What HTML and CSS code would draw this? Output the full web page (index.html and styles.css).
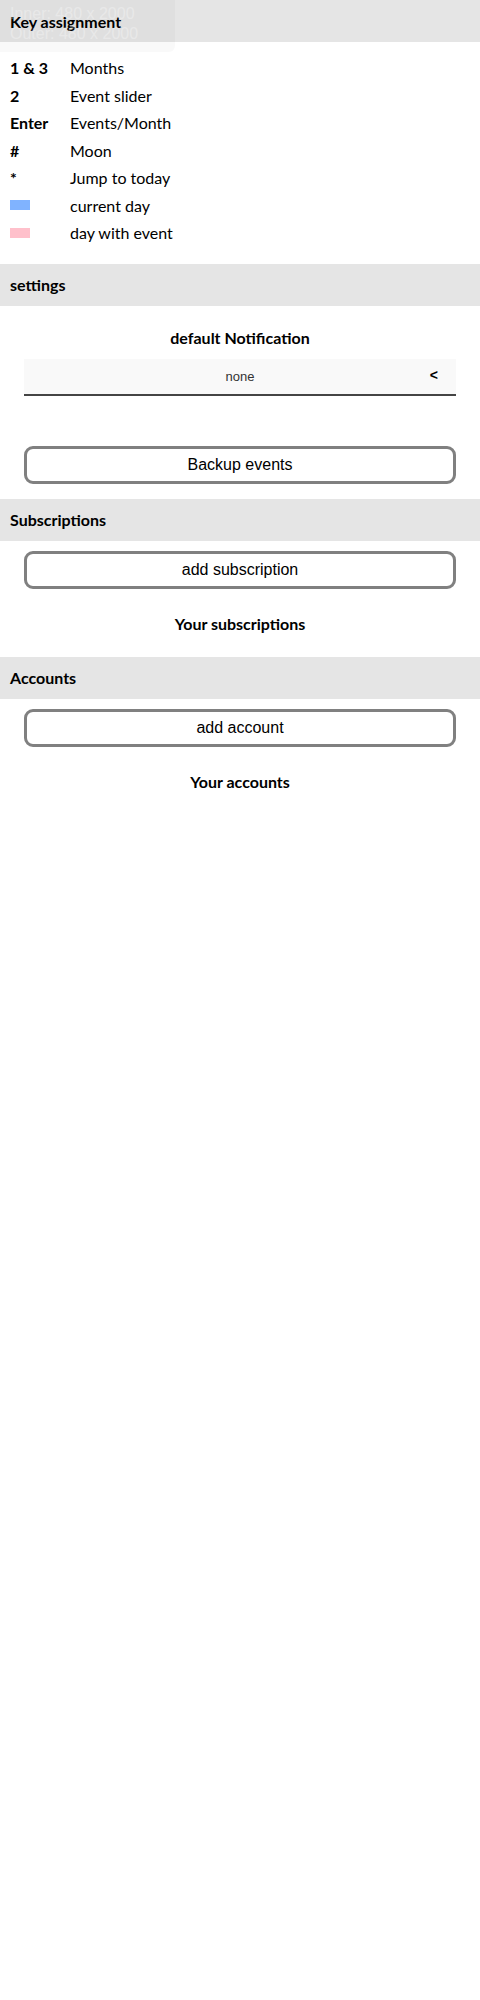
FILE: index.html
```html
<!DOCTYPE html>
<html>
<head>
<meta charset="utf-8">
<link rel="stylesheet" href="styles.css">
</head>
<body>
<div class="size-overlay">
  <div>Inner: 480 x 2000</div>
  <div>Outer: 480 x 2000</div>
</div>

<div class="section-head">Key assignment</div>
<div class="keys">
  <div class="key-row"><span class="key">1 &amp; 3</span><span>Months</span></div>
  <div class="key-row"><span class="key">2</span><span>Event slider</span></div>
  <div class="key-row"><span class="key">Enter</span><span>Events/Month</span></div>
  <div class="key-row"><span class="key">#</span><span>Moon</span></div>
  <div class="key-row"><span class="key">*</span><span>Jump to today</span></div>
  <div class="key-row"><span class="key"><i class="swatch swatch-blue"></i></span><span>current day</span></div>
  <div class="key-row"><span class="key"><i class="swatch swatch-pink"></i></span><span>day with event</span></div>
</div>

<div class="section-head">settings</div>
<div class="settings">
  <div class="sub-title notif-title">default Notification</div>
  <div class="select">
    <span class="select-value">none</span>
    <span class="select-arrow">&lt;</span>
  </div>
  <div class="btn backup-btn">Backup events</div>
</div>

<div class="section-head">Subscriptions</div>
<div class="group">
  <div class="btn">add subscription</div>
  <div class="sub-title list-title">Your subscriptions</div>
</div>

<div class="section-head">Accounts</div>
<div class="group">
  <div class="btn">add account</div>
  <div class="sub-title list-title">Your accounts</div>
</div>
</body>
</html>
```

FILE: styles.css
```css
html, body {
  margin: 0;
  padding: 0;
  background: #ffffff;
}

body {
  font-family: Lato, "Noto Sans", sans-serif;
  font-size: 16px;
  color: #000;
  position: relative;
}

.size-overlay {
  position: absolute;
  top: 0;
  left: 0;
  width: 165px;
  height: 48px;
  padding: 4px 0 0 10px;
  background: rgba(0, 0, 0, 0.025);
  border-bottom-right-radius: 6px;
  color: rgba(255, 255, 255, 0.3);
  font-family: "Liberation Sans", Arial, sans-serif;
  font-size: 16px;
  line-height: 20px;
  z-index: 2;
  pointer-events: none;
}

.section-head {
  height: 42px;
  display: flex;
  align-items: center;
  padding-left: 10px;
  background: #e5e5e5;
  font-weight: 700;
  font-size: 16px;
}

.keys {
  padding: 12px 0 17px 10px;
}

.key-row {
  display: grid;
  grid-template-columns: 60px 1fr;
  align-items: center;
  height: 27.5px;
  font-size: 16px;
}

.key {
  font-weight: 700;
  display: flex;
  align-items: center;
}

.swatch {
  display: inline-block;
  width: 20px;
  height: 10px;
}

.swatch-blue {
  background: #80b3ff;
}

.swatch-pink {
  background: #ffc0cb;
}

.sub-title {
  font-weight: 700;
  font-size: 16px;
  text-align: center;
  height: 20px;
  line-height: 20px;
}

.notif-title {
  margin-top: 22px;
}

.select {
  margin: 11px 24px 0;
  height: 35px;
  background: #f9f9f9;
  border-bottom: 2px solid #444;
  position: relative;
  display: flex;
  align-items: center;
  justify-content: center;
  font-family: "Liberation Sans", Arial, sans-serif;
}

.select-value {
  font-size: 13px;
  color: #333;
}

.select-arrow {
  position: absolute;
  right: 18px;
  top: 8px;
  font-size: 14px;
  font-weight: 700;
}

.btn {
  margin: 0 24px;
  height: 32px;
  border: 3px solid #808080;
  border-radius: 9px;
  display: flex;
  align-items: center;
  justify-content: center;
  font-family: "Liberation Sans", Arial, sans-serif;
  font-size: 16px;
  color: #000;
  background: #fff;
}

.backup-btn {
  margin-top: 50px;
}

.settings {
  padding-bottom: 15px;
}

.group {
  padding-top: 10px;
  padding-bottom: 23px;
}

.list-title {
  margin-top: 25px;
}
```
